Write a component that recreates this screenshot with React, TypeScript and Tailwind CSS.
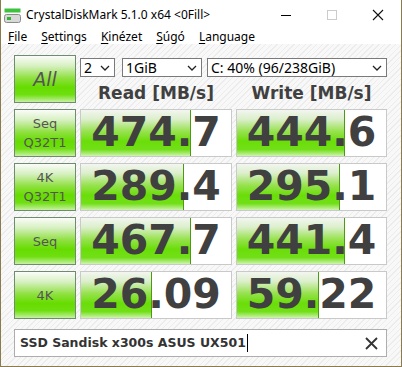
import React from "react";

type Row = {
  label: string[];
  read: string;
  write: string;
  readFill: number;
  writeFill: number;
};

const ROWS: Row[] = [
  { label: ["Seq", "Q32T1"], read: "474.7", write: "444.6", readFill: 110, writeFill: 108 },
  { label: ["4K", "Q32T1"], read: "289.4", write: "295.1", readFill: 103, writeFill: 103 },
  { label: ["Seq"], read: "467.7", write: "441.4", readFill: 110, writeFill: 108 },
  { label: ["4K"], read: "26.09", write: "59.22", readFill: 71, writeFill: 82 },
];

const greenButton =
  "bg-[linear-gradient(180deg,#fbfdf9_0%,#d6f0c0_22%,#8fe040_48%,#66dc00_68%,#6fdf10_84%,#c6f1a2_100%)]";

const barGradient =
  "bg-[linear-gradient(180deg,#f3f6f0_0%,#dcefcc_20%,#98e250_46%,#6ade08_68%,#72df18_86%,#cff3b0_100%)]";

const Chevron: React.FC = () => (
  <svg width="10" height="6" viewBox="0 0 10 6" className="shrink-0">
    <polyline points="1,1 5,5 9,1" fill="none" stroke="#222" strokeWidth="1.3" />
  </svg>
);

const Select: React.FC<{ value: string; className: string }> = ({ value, className }) => (
  <div
    className={`h-[19px] bg-white border border-[#7a7a7a] flex items-center justify-between pl-[3px] pr-[4px] text-[14px] leading-none text-black font-['Noto_Sans',sans-serif] ${className}`}
  >
    <span>{value}</span>
    <Chevron />
  </div>
);

const ValueCell: React.FC<{ value: string; fill: number }> = ({ value, fill }) => (
  <div className="relative h-[48px] bg-white border border-[#c9c9c9] overflow-hidden">
    <div
      className={`absolute left-0 top-0 bottom-0 ${barGradient} border-r border-[#4c9a14]`}
      style={{ width: fill }}
    />
    <div className="relative h-full flex items-center justify-center text-[41px] font-bold text-[#404040] font-['DejaVu_Sans',sans-serif]">
      {value}
    </div>
  </div>
);

const LabelButton: React.FC<{ lines: string[] }> = ({ lines }) => (
  <div
    className={`h-[48px] ${greenButton} border border-[#6f8c6f] flex flex-col items-center justify-center text-[13px] leading-[19px] text-[#555] font-['DejaVu_Sans',sans-serif]`}
  >
    {lines.map((l) => (
      <span key={l}>{l}</span>
    ))}
  </div>
);

const Menu: React.FC<{ first: string; rest: string }> = ({ first, rest }) => (
  <span>
    <span className="underline underline-offset-2">{first}</span>
    {rest}
  </span>
);

export default function App() {
  return (
    <div className="w-[402px] h-[367px] flex flex-col bg-white border-x border-b border-[#8c7b4f] overflow-hidden font-['Noto_Sans',sans-serif] text-black">
      {/* title bar */}
      <div className="h-[30px] shrink-0 flex items-center pl-[3px] text-[12px]">
        <svg width="17" height="15" viewBox="0 0 17 15" className="mr-[5px]">
          <rect x="0.5" y="0.5" width="16" height="4" fill="#3cc23c" />
          <rect x="0.5" y="6.5" width="16" height="8" rx="2" fill="#d8d8d8" stroke="#8a8a8a" />
          <rect x="3" y="9" width="4" height="3" fill="#2fb52f" />
        </svg>
        <span>CrystalDiskMark 5.1.0 x64 &lt;0Fill&gt;</span>
        <div className="ml-auto flex items-center h-full">
          <div className="w-[46px] flex justify-center">
            <div className="w-[10px] h-[1px] bg-black" />
          </div>
          <div className="w-[46px] flex justify-center">
            <div className="w-[10px] h-[10px] border border-[#cccccc]" />
          </div>
          <div className="w-[46px] flex justify-center">
            <svg width="12" height="12" viewBox="0 0 12 12">
              <path d="M1 1 L11 11 M11 1 L1 11" stroke="#111" strokeWidth="1.1" />
            </svg>
          </div>
        </div>
      </div>

      {/* menu bar */}
      <div className="h-[14px] shrink-0 flex items-center gap-[14px] pl-[7px] text-[12px] leading-none">
        <Menu first="F" rest="ile" />
        <Menu first="S" rest="ettings" />
        <Menu first="K" rest="inézet" />
        <Menu first="S" rest="úgó" />
        <Menu first="L" rest="anguage" />
      </div>

      {/* content */}
      <div className="flex-1 pt-[11px] pl-[13px] bg-[repeating-linear-gradient(135deg,#f8f8f8_0px,#f8f8f8_3px,#ececec_3px,#ececec_4px)]">
        <div className="grid grid-cols-[62px_152px_151px] gap-x-[4px] gap-y-[6px]">
          <div
            className={`h-[48px] ${greenButton} border border-[#6f8c6f] flex items-center justify-center text-[19px] text-[#555] font-['DejaVu_Sans',sans-serif] italic`}
          >
            All
          </div>
          <div className="col-span-2 flex flex-col">
            <div className="flex mt-[3px]">
              <Select value="2" className="w-[35px]" />
              <Select value="1GiB" className="w-[80px] ml-[7px]" />
              <Select value="C: 40% (96/238GiB)" className="w-[180px] ml-[5px]" />
            </div>
            <div className="flex mt-[6px] text-[17px] font-bold text-[#404040] font-['DejaVu_Sans',sans-serif] leading-[20px]">
              <div className="w-[152px] text-center">Read [MB/s]</div>
              <div className="w-[151px] ml-[4px] text-center">Write [MB/s]</div>
            </div>
          </div>

          {ROWS.map((r) => (
            <React.Fragment key={r.read}>
              <LabelButton lines={r.label} />
              <ValueCell value={r.read} fill={r.readFill} />
              <ValueCell value={r.write} fill={r.writeFill} />
            </React.Fragment>
          ))}
        </div>

        {/* comment field */}
        <div className="mt-[10px] w-[373px] h-[28px] bg-white border border-[#adadad] flex items-center pl-[5px] pr-[8px] text-[12.5px] font-bold text-[#333] font-['DejaVu_Sans',sans-serif]">
          <span>SSD Sandisk x300s ASUS UX501</span>
          <span className="w-[1px] h-[18px] bg-black ml-[1px]" />
          <svg width="13" height="13" viewBox="0 0 13 13" className="ml-auto">
            <path d="M1 1 L12 12 M12 1 L1 12" stroke="#333" strokeWidth="1.8" />
          </svg>
        </div>
      </div>
    </div>
  );
}
